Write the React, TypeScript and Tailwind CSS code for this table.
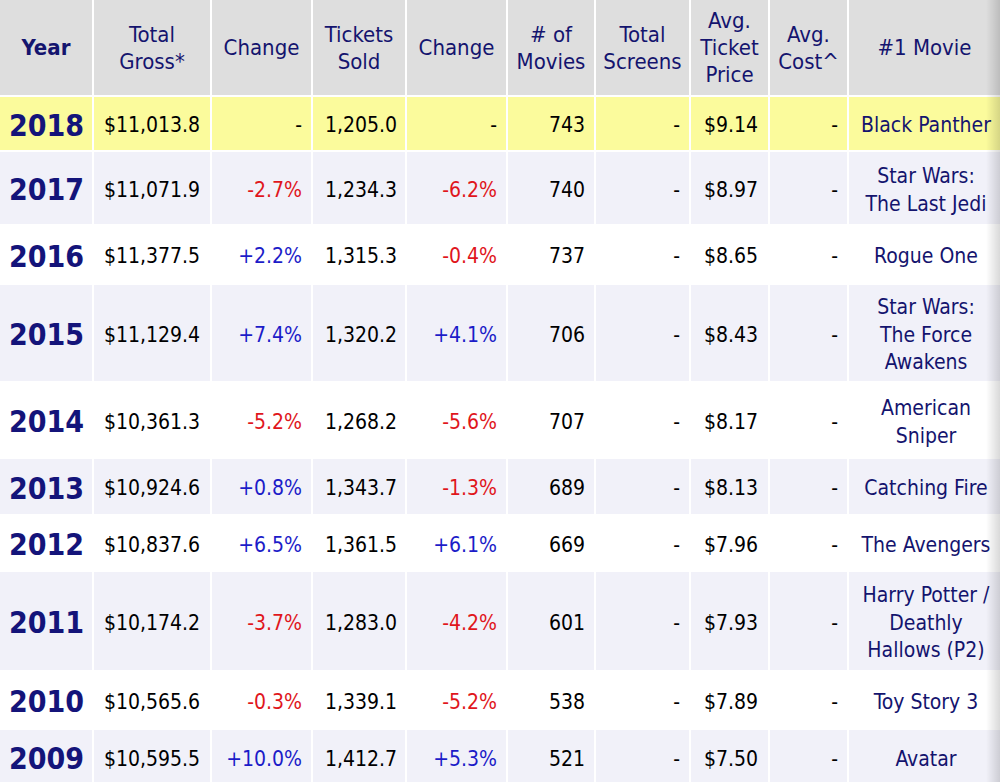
interface YearRow {
  year: string;
  gross: string;
  grossChange: string;
  tickets: string;
  ticketsChange: string;
  movies: string;
  price: string;
  movie: string[];
  height: string;
  bg: string;
}

const rows: YearRow[] = [
  { year: "2018", gross: "$11,013.8", grossChange: "-", tickets: "1,205.0", ticketsChange: "-", movies: "743", price: "$9.14", movie: ["Black Panther"], height: "h-[53px]", bg: "bg-[#fbfb9c]" },
  { year: "2017", gross: "$11,071.9", grossChange: "-2.7%", tickets: "1,234.3", ticketsChange: "-6.2%", movies: "740", price: "$8.97", movie: ["Star Wars:", "The Last Jedi"], height: "h-[72px]", bg: "bg-[#f1f1f9]" },
  { year: "2016", gross: "$11,377.5", grossChange: "+2.2%", tickets: "1,315.3", ticketsChange: "-0.4%", movies: "737", price: "$8.65", movie: ["Rogue One"], height: "h-[57px]", bg: "bg-white" },
  { year: "2015", gross: "$11,129.4", grossChange: "+7.4%", tickets: "1,320.2", ticketsChange: "+4.1%", movies: "706", price: "$8.43", movie: ["Star Wars:", "The Force", "Awakens"], height: "h-[96px]", bg: "bg-[#f1f1f9]" },
  { year: "2014", gross: "$10,361.3", grossChange: "-5.2%", tickets: "1,268.2", ticketsChange: "-5.6%", movies: "707", price: "$8.17", movie: ["American", "Sniper"], height: "h-[74px]", bg: "bg-white" },
  { year: "2013", gross: "$10,924.6", grossChange: "+0.8%", tickets: "1,343.7", ticketsChange: "-1.3%", movies: "689", price: "$8.13", movie: ["Catching Fire"], height: "h-[55px]", bg: "bg-[#f1f1f9]" },
  { year: "2012", gross: "$10,837.6", grossChange: "+6.5%", tickets: "1,361.5", ticketsChange: "+6.1%", movies: "669", price: "$7.96", movie: ["The Avengers"], height: "h-[54px]", bg: "bg-white" },
  { year: "2011", gross: "$10,174.2", grossChange: "-3.7%", tickets: "1,283.0", ticketsChange: "-4.2%", movies: "601", price: "$7.93", movie: ["Harry Potter /", "Deathly", "Hallows (P2)"], height: "h-[98px]", bg: "bg-[#f1f1f9]" },
  { year: "2010", gross: "$10,565.6", grossChange: "-0.3%", tickets: "1,339.1", ticketsChange: "-5.2%", movies: "538", price: "$7.89", movie: ["Toy Story 3"], height: "h-[56px]", bg: "bg-white" },
  { year: "2009", gross: "$10,595.5", grossChange: "+10.0%", tickets: "1,412.7", ticketsChange: "+5.3%", movies: "521", price: "$7.50", movie: ["Avatar"], height: "h-[54px]", bg: "bg-[#f1f1f9]" },
];

const cols = "grid grid-cols-[92px_116px_99px_92px_99px_86px_93px_77px_77px_151px] gap-x-[2px]";

function changeColor(v: string) {
  if (v.startsWith("+")) return "text-[#1c1cc8]";
  if (v.startsWith("-") && v.length > 1) return "text-[#e0161c]";
  return "text-black";
}

function HeaderCell({ lines, bold }: { lines: string[]; bold?: boolean }) {
  return (
    <div className={`bg-[#dedede] flex flex-col items-center justify-center text-center text-[22px] leading-[27px] text-[#14146e] ${bold ? "font-bold" : ""}`}>
      {lines.map((l) => (
        <span key={l} className="whitespace-nowrap">{l}</span>
      ))}
    </div>
  );
}

export default function App() {
  return (
    <div
      className="relative w-[1000px] h-[782px] overflow-hidden bg-white font-stretch-condensed"
      style={{ fontFamily: "'DejaVu Sans Condensed', 'DejaVu Sans', sans-serif" }}
    >
      <div className="flex flex-col gap-y-[2px]">
        <div className={`${cols} h-[95px]`}>
          <HeaderCell lines={["Year"]} bold />
          <HeaderCell lines={["Total", "Gross*"]} />
          <HeaderCell lines={["Change"]} />
          <HeaderCell lines={["Tickets", "Sold"]} />
          <HeaderCell lines={["Change"]} />
          <HeaderCell lines={["# of", "Movies"]} />
          <HeaderCell lines={["Total", "Screens"]} />
          <HeaderCell lines={["Avg.", "Ticket", "Price"]} />
          <HeaderCell lines={["Avg.", "Cost^"]} />
          <HeaderCell lines={["#1 Movie"]} />
        </div>

        {rows.map((r) => (
          <div key={r.year} className={`${cols} ${r.height} text-[21px] leading-[27.5px] text-black`}>
            <div className={`${r.bg} flex items-center justify-center pt-[4px] pl-[1px] text-[30px] font-bold text-[#14147a]`}>{r.year}</div>
            <div className={`${r.bg} flex items-center justify-center pt-[5px]`}>{r.gross}</div>
            <div className={`${r.bg} flex items-center justify-end pt-[5px] pr-[9px] ${changeColor(r.grossChange)}`}>{r.grossChange}</div>
            <div className={`${r.bg} flex items-center justify-end pt-[5px] pr-[8px]`}>{r.tickets}</div>
            <div className={`${r.bg} flex items-center justify-end pt-[5px] pr-[9px] ${changeColor(r.ticketsChange)}`}>{r.ticketsChange}</div>
            <div className={`${r.bg} flex items-center justify-end pt-[5px] pr-[9px]`}>{r.movies}</div>
            <div className={`${r.bg} flex items-center justify-end pt-[5px] pr-[9px]`}>-</div>
            <div className={`${r.bg} flex items-center justify-end pt-[5px] pr-[10px]`}>{r.price}</div>
            <div className={`${r.bg} flex items-center justify-end pt-[5px] pr-[9px]`}>-</div>
            <div className={`${r.bg} flex flex-col items-center justify-center pt-[5px] pl-[3px] text-center text-[#14146e]`}>
              {r.movie.map((l) => (
                <span key={l} className="whitespace-nowrap">{l}</span>
              ))}
            </div>
          </div>
        ))}
      </div>

      {/* scroll shadow on the right edge */}
      <div className="pointer-events-none absolute right-0 top-0 h-full w-[14px] bg-linear-to-r from-transparent to-black/15" />
    </div>
  );
}
